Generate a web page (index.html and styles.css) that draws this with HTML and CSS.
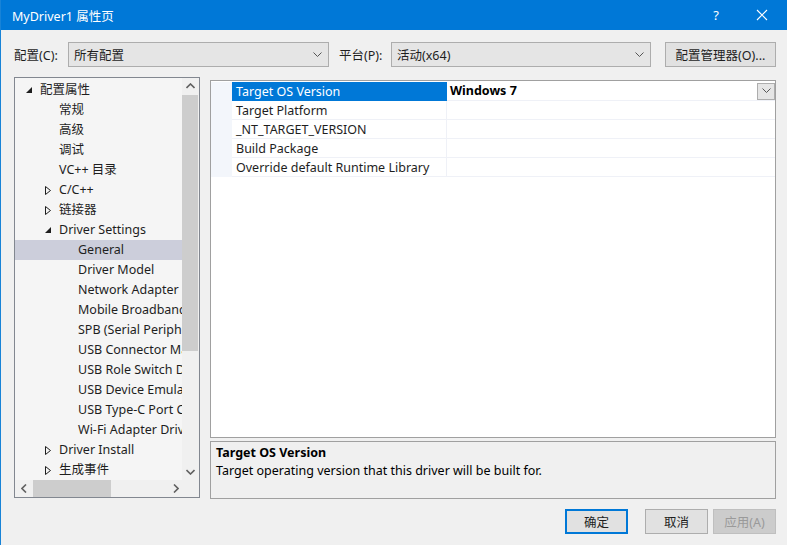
FILE: index.html
```html
<!DOCTYPE html>
<html lang="zh-CN">
<head>
    <meta charset="UTF-8">
    <title>MyDriver1 属性页</title>
    <link rel="stylesheet" href="styles.css">
</head>
<body>
    <div class="window">
        <!-- Title Bar -->
        <div class="titlebar">
            <span class="title">MyDriver1 属性页</span>
            <span class="title-btn help">?</span>
            <span class="title-btn close">
                <svg width="12" height="12" viewBox="0 0 12 12"><path d="M1 1L11 11M11 1L1 11" stroke="#fff" stroke-width="1.1"/></svg>
            </span>
        </div>

        <!-- Config Row -->
        <div class="config-row">
            <label class="config-label">配置(C):</label>
            <div class="combo combo-config">
                <span>所有配置</span>
                <svg class="chev" width="9" height="6" viewBox="0 0 9 6"><path d="M0.5 0.5L4.5 4.5L8.5 0.5" fill="none" stroke="#555" stroke-width="1"/></svg>
            </div>
            <label class="config-label platform-label">平台(P):</label>
            <div class="combo combo-platform">
                <span>活动(x64)</span>
                <svg class="chev" width="9" height="6" viewBox="0 0 9 6"><path d="M0.5 0.5L4.5 4.5L8.5 0.5" fill="none" stroke="#555" stroke-width="1"/></svg>
            </div>
            <button class="btn manager-btn">配置管理器(O)...</button>
        </div>

        <!-- Main -->
        <div class="main">
            <div class="tree">
                <div class="tree-body">
                    <div class="tree-list">
                        <div class="tree-row lvl1"><svg class="arrow" width="6" height="6" viewBox="0 0 6 6"><path d="M6 0L6 6L0 6Z" fill="#1e1e1e"/></svg>配置属性</div>
                        <div class="tree-row lvl2">常规</div>
                        <div class="tree-row lvl2">高级</div>
                        <div class="tree-row lvl2">调试</div>
                        <div class="tree-row lvl2">VC++ 目录</div>
                        <div class="tree-row lvl2"><svg class="arrow" width="6" height="9" viewBox="0 0 6 9"><path d="M0.5 0.5L5.5 4.5L0.5 8.5Z" fill="none" stroke="#1e1e1e" stroke-width="1"/></svg>C/C++</div>
                        <div class="tree-row lvl2"><svg class="arrow" width="6" height="9" viewBox="0 0 6 9"><path d="M0.5 0.5L5.5 4.5L0.5 8.5Z" fill="none" stroke="#1e1e1e" stroke-width="1"/></svg>链接器</div>
                        <div class="tree-row lvl2"><svg class="arrow" width="6" height="6" viewBox="0 0 6 6"><path d="M6 0L6 6L0 6Z" fill="#1e1e1e"/></svg>Driver Settings</div>
                        <div class="tree-row lvl3 selected">General</div>
                        <div class="tree-row lvl3">Driver Model</div>
                        <div class="tree-row lvl3">Network Adapter Driver</div>
                        <div class="tree-row lvl3">Mobile Broadband Driver</div>
                        <div class="tree-row lvl3">SPB (Serial Peripheral Bus)</div>
                        <div class="tree-row lvl3">USB Connector Manager</div>
                        <div class="tree-row lvl3">USB Role Switch Driver</div>
                        <div class="tree-row lvl3">USB Device Emulation</div>
                        <div class="tree-row lvl3">USB Type-C Port Controller</div>
                        <div class="tree-row lvl3">Wi-Fi Adapter Driver</div>
                        <div class="tree-row lvl2"><svg class="arrow" width="6" height="9" viewBox="0 0 6 9"><path d="M0.5 0.5L5.5 4.5L0.5 8.5Z" fill="none" stroke="#1e1e1e" stroke-width="1"/></svg>Driver Install</div>
                        <div class="tree-row lvl2"><svg class="arrow" width="6" height="9" viewBox="0 0 6 9"><path d="M0.5 0.5L5.5 4.5L0.5 8.5Z" fill="none" stroke="#1e1e1e" stroke-width="1"/></svg>生成事件</div>
                    </div>
                    <div class="vscroll">
                        <svg class="sarrow" width="9" height="6" viewBox="0 0 9 6"><path d="M0.5 5L4.5 1L8.5 5" fill="none" stroke="#606060" stroke-width="1.6"/></svg>
                        <div class="vtrack"><div class="vthumb"></div></div>
                        <svg class="sarrow" width="9" height="6" viewBox="0 0 9 6"><path d="M0.5 1L4.5 5L8.5 1" fill="none" stroke="#606060" stroke-width="1.6"/></svg>
                    </div>
                </div>
                <div class="hscroll">
                    <svg class="sarrow" width="6" height="9" viewBox="0 0 6 9"><path d="M5 0.5L1 4.5L5 8.5" fill="none" stroke="#606060" stroke-width="1.6"/></svg>
                    <div class="htrack"><div class="hthumb"></div></div>
                    <svg class="sarrow" width="6" height="9" viewBox="0 0 6 9"><path d="M1 0.5L5 4.5L1 8.5" fill="none" stroke="#606060" stroke-width="1.6"/></svg>
                    <div class="corner"></div>
                </div>
            </div>

            <div class="right">
                <div class="grid">
                    <div class="prop-row">
                        <div class="gutter"></div>
                        <div class="prop-name active">Target OS Version</div>
                        <div class="prop-value bold">Windows 7
                            <span class="drop-btn"><svg width="9" height="6" viewBox="0 0 9 6"><path d="M0.5 0.5L4.5 4.5L8.5 0.5" fill="none" stroke="#555" stroke-width="1"/></svg></span>
                        </div>
                    </div>
                    <div class="prop-row">
                        <div class="gutter"></div>
                        <div class="prop-name">Target Platform</div>
                        <div class="prop-value"></div>
                    </div>
                    <div class="prop-row">
                        <div class="gutter"></div>
                        <div class="prop-name">_NT_TARGET_VERSION</div>
                        <div class="prop-value"></div>
                    </div>
                    <div class="prop-row">
                        <div class="gutter"></div>
                        <div class="prop-name">Build Package</div>
                        <div class="prop-value"></div>
                    </div>
                    <div class="prop-row">
                        <div class="gutter"></div>
                        <div class="prop-name">Override default Runtime Library</div>
                        <div class="prop-value"></div>
                    </div>
                </div>
                <div class="description">
                    <div class="desc-title">Target OS Version</div>
                    <div class="desc-text">Target operating version that this driver will be built for.</div>
                </div>
            </div>
        </div>

        <!-- Buttons -->
        <div class="footer">
            <button class="btn dlg-btn default">确定</button>
            <button class="btn dlg-btn">取消</button>
            <button class="btn dlg-btn disabled">应用(A)</button>
        </div>
    </div>
</body>
</html>
```

FILE: styles.css
```css
body {
    margin: 0;
    background: #f0f0f0;
    font-family: "Noto Sans", "Noto Sans CJK SC", sans-serif;
    font-size: 12.5px;
    color: #1e1e1e;
}
.window {
    width: 787px;
    height: 545px;
    box-sizing: border-box;
    border-left: 1px solid #1883d7;
    background: #f0f0f0;
    overflow: hidden;
}
.titlebar {
    height: 30px;
    background: #0078d7;
    color: #fff;
    display: flex;
    align-items: center;
    padding-left: 11px;
}
.title {
    flex: 1;
}
.title-btn {
    width: 46px;
    text-align: center;
    font-size: 13px;
}
.close {
    display: flex;
    justify-content: center;
    margin-right: 2px;
}

/* config row */
.config-row {
    display: flex;
    align-items: center;
    margin-top: 12px;
    height: 25px;
    padding-left: 13px;
}
.config-label {
    width: 54px;
}
.platform-label {
    margin-left: 10px;
    width: 52px;
}
.combo {
    height: 23px;
    border: 1px solid #adadad;
    background: #e5e5e5;
    display: flex;
    align-items: center;
    padding: 0 5px;
    box-sizing: content-box;
}
.combo span {
    flex: 1;
}
.combo-config {
    width: 249px;
}
.combo-platform {
    width: 248px;
}
.chev {
    margin-right: 1px;
}
.btn {
    font-family: inherit;
    font-size: 12.5px;
    color: #1e1e1e;
    background: #e1e1e1;
    border: 1px solid #adadad;
    padding: 0;
}
.manager-btn {
    margin-left: 14px;
    width: 111px;
    height: 25px;
}

/* main area */
.main {
    display: flex;
    margin-top: 10px;
    padding-left: 13px;
}
.tree {
    width: 186px;
    height: 421px;
    box-sizing: border-box;
    border: 1px solid #828790;
    background: #f0f0f0;
    display: flex;
    flex-direction: column;
}
.tree-body {
    flex: 1;
    display: flex;
    min-height: 0;
}
.tree-list {
    flex: 1;
    background: #f5f5f5;
    padding-top: 2px;
    overflow: hidden;
}
.tree-row {
    height: 20px;
    line-height: 20px;
    white-space: nowrap;
    display: flex;
    align-items: center;
}
.tree-row .arrow {
    flex: none;
}
.lvl1 {
    padding-left: 11px;
}
.lvl1 .arrow {
    margin-right: 8px;
}
.lvl2 {
    padding-left: 44px;
}
.lvl2 .arrow {
    margin-left: -14px;
    margin-right: 8px;
}
.lvl3 {
    padding-left: 63px;
}
.selected {
    background: #cccedb;
}
.vscroll {
    width: 16px;
    margin-right: 1px;
    display: flex;
    flex-direction: column;
    align-items: center;
    background: #f0f0f0;
}
.vscroll .sarrow {
    margin: 5px 0;
}
.vtrack {
    flex: 1;
    width: 100%;
}
.vthumb {
    margin-top: 1px;
    height: 256px;
    background: #cdcdcd;
}
.hscroll {
    height: 17px;
    display: flex;
    align-items: center;
    background: #f0f0f0;
    padding-left: 6px;
}
.htrack {
    flex: 1;
    height: 100%;
    padding: 0 5px 0 6px;
}
.hthumb {
    width: 78px;
    height: 100%;
    background: #cdcdcd;
}
.corner {
    width: 20px;
}
.right {
    margin-left: 10px;
    display: flex;
    flex-direction: column;
    margin-top: 3px;
}
.grid {
    width: 566px;
    height: 358px;
    box-sizing: border-box;
    border: 1px solid #a0a0a0;
    background: #fff;
    padding-top: 1px;
}
.prop-row {
    display: flex;
    height: 19px;
}
.gutter {
    width: 21px;
    background: #f3f6fb;
}
.prop-name {
    width: 210px;
    padding-left: 4px;
    line-height: 20px;
    border-bottom: 1px solid #eff1f7;
    border-right: 1px solid #eff1f7;
    white-space: nowrap;
}
.prop-name.active {
    background: #0078d7;
    color: #fff;
    border-color: #0078d7;
}
.prop-value {
    flex: 1;
    padding-left: 3px;
    line-height: 20px;
    border-bottom: 1px solid #eff1f7;
    display: flex;
    align-items: center;
}
.bold {
    font-weight: bold;
    color: #000;
    justify-content: space-between;
}
.drop-btn {
    width: 16px;
    height: 15px;
    background: #e5e5e5;
    border: 1px solid #adadad;
    display: flex;
    align-items: center;
    justify-content: center;
}
.description {
    margin-top: 3px;
    width: 566px;
    height: 58px;
    box-sizing: border-box;
    border: 1px solid #a0a0a0;
    background: #f0f0f0;
    padding: 2px 5px;
    line-height: 18px;
}
.desc-title {
    font-weight: bold;
    color: #000;
}
.desc-text {
    color: #000;
}

/* footer */
.footer {
    display: flex;
    justify-content: flex-end;
    gap: 17px;
    margin-top: 10px;
    padding-right: 11px;
}
.dlg-btn {
    width: 63px;
    height: 25px;
}
.dlg-btn.default {
    border: 2px solid #0078d7;
}
.dlg-btn.disabled {
    margin-left: -12px;
    background: #cccccc;
    border-color: #bfbfbf;
    color: #9a9a9a;
}
```
